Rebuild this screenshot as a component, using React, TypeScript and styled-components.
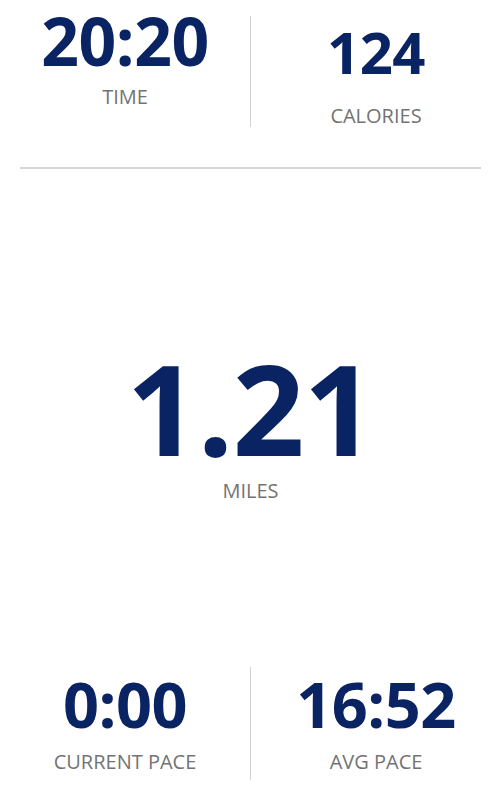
import React from "react";
import styled, { createGlobalStyle } from "styled-components";

const GlobalStyle = createGlobalStyle`
  html, body {
    margin: 0;
    padding: 0;
    background: #ffffff;
  }
  body {
    font-family: "Open Sans", "Noto Sans", sans-serif;
  }
`;

const Page = styled.div`
  height: 800px;
  display: flex;
  flex-direction: column;
  background: #fff;
  overflow: hidden;
`;

const Row = styled.div<{ $top: number; $height: number }>`
  display: grid;
  grid-template-columns: 1fr 1px 1fr;
  margin-top: ${(p) => p.$top}px;
  height: ${(p) => p.$height}px;
`;

const Divider = styled.div`
  background: #d2d2d2;
`;

const Cell = styled.div<{ $shift: number }>`
  display: flex;
  flex-direction: column;
  align-items: center;
  margin-top: ${(p) => p.$shift}px;
`;

const Value = styled.div<{ $size: number }>`
  font-size: ${(p) => p.$size}px;
  line-height: 1;
  font-weight: 700;
  color: #0a2463;
  letter-spacing: -0.5px;
`;

const Label = styled.div<{ $gap: number }>`
  margin-top: ${(p) => p.$gap}px;
  font-size: 20px;
  line-height: 1;
  color: #737373;
`;

const Rule = styled.hr`
  margin: 40px 20px 0;
  border: 0;
  height: 2px;
  background: #d6d6d6;
`;

const Center = styled.div`
  flex: 1;
  display: flex;
  flex-direction: column;
  align-items: center;
  justify-content: center;
  padding-top: 9px;
`;

const Big = styled.div`
  font-size: 126px;
  line-height: 1;
  font-weight: 700;
  color: #0a2463;
  letter-spacing: -1px;
`;

const Spacer = styled.div`
  height: 20px;
`;

export default function App() {
  return (
    <>
      <GlobalStyle />
      <Page>
        <Row $top={16} $height={111}>
          <Cell $shift={-9}>
            <Value $size={66}>20:20</Value>
            <Label $gap={14}>TIME</Label>
          </Cell>
          <Divider />
          <Cell $shift={7}>
            <Value $size={58}>124</Value>
            <Label $gap={25}>CALORIES</Label>
          </Cell>
        </Row>
        <Rule />
        <Center>
          <Big>1.21</Big>
          <Label $gap={11}>MILES</Label>
        </Center>
        <Row $top={0} $height={113}>
          <Cell $shift={5}>
            <Value $size={63}>0:00</Value>
            <Label $gap={17}>CURRENT PACE</Label>
          </Cell>
          <Divider />
          <Cell $shift={5}>
            <Value $size={63}>16:52</Value>
            <Label $gap={17}>AVG PACE</Label>
          </Cell>
        </Row>
        <Spacer />
      </Page>
    </>
  );
}
